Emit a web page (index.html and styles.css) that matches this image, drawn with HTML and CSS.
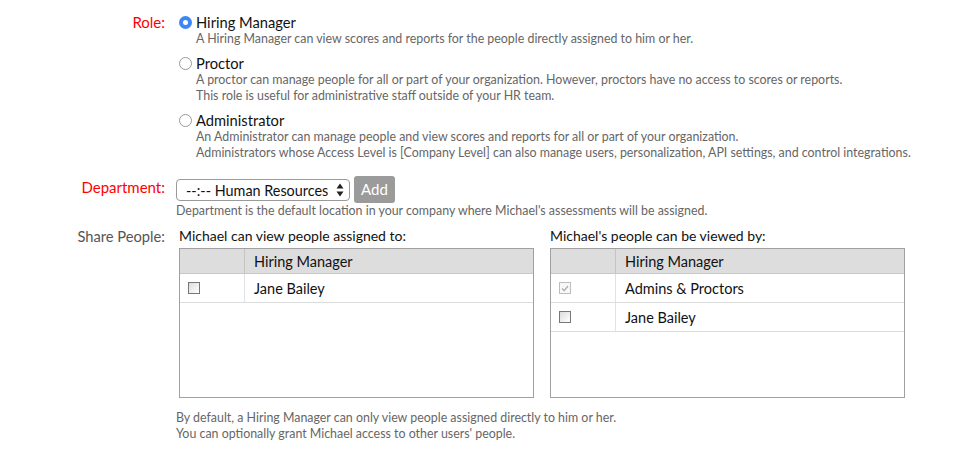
FILE: index.html
```html
<!DOCTYPE html>
<html>
<head>
<meta charset="utf-8">
<link rel="stylesheet" href="styles.css">
</head>
<body>
<div class="form">
  <div class="row role-row">
    <div class="label red">Role:</div>
    <div class="options">
      <div class="option">
        <span class="radio checked"></span>
        <div class="opt-text">
          <div class="opt-title">Hiring Manager</div>
          <div class="desc">A Hiring Manager can view scores and reports for the people directly assigned to him or her.</div>
        </div>
      </div>
      <div class="option">
        <span class="radio"></span>
        <div class="opt-text">
          <div class="opt-title">Proctor</div>
          <div class="desc">A proctor can manage people for all or part of your organization. However, proctors have no access to scores or reports.<br>This role is useful for administrative staff outside of your HR team.</div>
        </div>
      </div>
      <div class="option">
        <span class="radio"></span>
        <div class="opt-text">
          <div class="opt-title">Administrator</div>
          <div class="desc">An Administrator can manage people and view scores and reports for all or part of your organization.<br>Administrators whose Access Level is [Company Level] can also manage users, personalization, API settings, and control integrations.</div>
        </div>
      </div>
    </div>
  </div>

  <div class="row dept-row">
    <div class="label red dept-label">Department:</div>
    <div class="dept">
      <div class="dept-controls">
        <div class="select">
          <span class="select-text">--:-- Human Resources</span>
          <svg class="arrows" width="8" height="14" viewBox="0 0 8 14"><path d="M4 0.5 L7.5 5.5 H0.5 Z M4 13.5 L7.5 8.5 H0.5 Z" fill="#222"/></svg>
        </div>
        <div class="btn">Add</div>
      </div>
      <div class="desc">Department is the default location in your company where Michael's assessments will be assigned.</div>
    </div>
  </div>

  <div class="row share-row">
    <div class="label gray">Share People:</div>
    <div class="share">
      <div class="panels">
        <div class="panel">
          <div class="panel-title">Michael can view people assigned to:</div>
          <div class="grid-box">
            <table class="grid">
              <tr class="head"><th class="c1"></th><th>Hiring Manager</th></tr>
              <tr><td class="c1"><span class="cb"></span></td><td>Jane Bailey</td></tr>
            </table>
          </div>
        </div>
        <div class="panel">
          <div class="panel-title">Michael's people can be viewed by:</div>
          <div class="grid-box">
            <table class="grid">
              <tr class="head"><th class="c1"></th><th>Hiring Manager</th></tr>
              <tr><td class="c1"><span class="cb disabled"><svg width="8" height="7" viewBox="0 0 8 7"><path d="M1 3.5 L3.2 5.6 L7 1" fill="none" stroke="#aaa" stroke-width="1.2"/></svg></span></td><td>Admins &amp; Proctors</td></tr>
              <tr><td class="c1"><span class="cb"></span></td><td>Jane Bailey</td></tr>
            </table>
          </div>
        </div>
      </div>
      <div class="desc foot">By default, a Hiring Manager can only view people assigned directly to him or her.<br>You can optionally grant Michael access to other users' people.</div>
    </div>
  </div>
</div>
</body>
</html>
```

FILE: styles.css
```css
html, body {
  margin: 0;
  padding: 0;
  background: #fff;
}
body {
  font-family: Lato, "Open Sans", "Liberation Sans", sans-serif;
  color: #111;
}
.form {
  padding-top: 13px;
}
.row {
  display: grid;
  grid-template-columns: 165px 1fr;
  column-gap: 11px;
}
.label {
  text-align: right;
  font-size: 15px;
  line-height: 18px;
}
.red { color: #f00; }
.gray { color: #555; }

.options {
  display: flex;
  flex-direction: column;
  gap: 7px;
}
.option {
  display: flex;
  align-items: flex-start;
}
.radio {
  flex: none;
  width: 13px;
  height: 13px;
  box-sizing: border-box;
  border: 1px solid #9a9a9a;
  border-radius: 50%;
  margin: 3px 4px 0 3px;
  background: #fff;
  position: relative;
}
.radio.checked {
  border: none;
  background: #3b87f5;
}
.radio.checked::after {
  content: "";
  position: absolute;
  left: 4px;
  top: 4px;
  width: 5px;
  height: 5px;
  border-radius: 50%;
  background: #fff;
}
.opt-title {
  font-size: 14.7px;
  line-height: 18px;
  color: #111;
}
.desc {
  font-size: 12.4px;
  line-height: 16px;
  color: #666;
}

.dept-row {
  margin-top: 15px;
}
.dept-label {
  padding-top: 2px;
}
.dept-controls {
  display: flex;
  align-items: center;
  gap: 4px;
}
.select {
  width: 174px;
  height: 22px;
  box-sizing: border-box;
  border: 1px solid #9a9a9a;
  border-radius: 4px;
  display: flex;
  align-items: center;
  justify-content: space-between;
  padding: 0 5px 0 9px;
  font-size: 14.4px;
  color: #111;
  margin-top: 1px;
}
.btn {
  width: 41px;
  height: 27px;
  box-sizing: border-box;
  background: #9b9b9b;
  color: #fff;
  border-radius: 3px;
  font-size: 15px;
  line-height: 27px;
  text-align: center;
}

.share-row {
  margin-top: 8px;
}
.share-row .label {
  font-size: 14.7px;
  line-height: 18px;
}
.panels {
  display: flex;
  gap: 16px;
  padding-left: 3px;
}
.panel {
  width: 355px;
}
.panel-title {
  font-size: 14px;
  line-height: 18px;
  color: #111;
  margin-bottom: 3px;
}
.grid-box {
  height: 150px;
  box-sizing: border-box;
  border: 1px solid #a0a0a0;
}
.grid {
  width: 100%;
  border-collapse: collapse;
  font-size: 14.5px;
  color: #111;
}
.grid th {
  background: #dddddd;
  font-weight: normal;
  text-align: left;
  height: 24px;
  padding: 0 0 0 9px;
  border-bottom: 1px solid #c8c8c8;
}
.grid th.c1 {
  border-right: 1px solid #c4c4c4;
}
.grid td {
  height: 28px;
  padding: 0 0 0 9px;
  border-bottom: 1px solid #dcdcdc;
}
.grid .c1 {
  width: 56px;
  padding-left: 8px;
}
.grid td.c1 {
  border-right: 1px solid #e2e2e2;
}
.cb {
  display: block;
  width: 12px;
  height: 12px;
  box-sizing: border-box;
  border: 1px solid #777;
  background: linear-gradient(135deg, #dcdcdc, #ffffff);
  position: relative;
}
.cb.disabled {
  border-color: #bdbdbd;
  background: #f8f8f8;
}
.cb svg {
  position: absolute;
  left: 1px;
  top: 1.5px;
}
.foot {
  margin-top: 12px;
}
```
